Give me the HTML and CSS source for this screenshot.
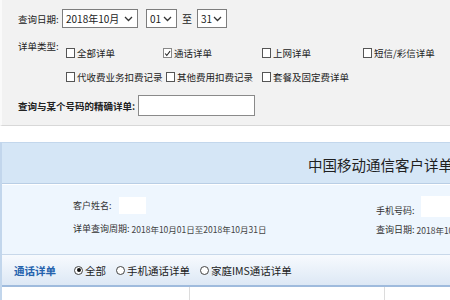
FILE: index.html
```html
<!DOCTYPE html>
<html lang="zh-CN">
<head>
<meta charset="utf-8">
<title>详单查询</title>
<link rel="stylesheet" href="styles.css">
</head>
<body>
<div class="query">
  <div class="row-date">
    <span class="lbl">查询日期:</span>
    <span class="sel sel-month"><span class="val">2018年10月</span><svg class="chev" width="9" height="6" viewBox="0 0 9 6"><path d="M1 1 L4.5 4.5 L8 1" fill="none" stroke="#333" stroke-width="1.3"/></svg></span>
    <span class="sel sel-day"><span class="val">01</span><svg class="chev" width="9" height="6" viewBox="0 0 9 6"><path d="M1 1 L4.5 4.5 L8 1" fill="none" stroke="#333" stroke-width="1.3"/></svg></span>
    <span class="to">至</span>
    <span class="sel sel-day2"><span class="val">31</span><svg class="chev" width="9" height="6" viewBox="0 0 9 6"><path d="M1 1 L4.5 4.5 L8 1" fill="none" stroke="#333" stroke-width="1.3"/></svg></span>
  </div>
  <div class="row-type">
    <span class="lbl type-lbl">详单类型:</span>
    <div class="checks">
      <label class="chk"><span class="box"></span>全部详单</label>
      <label class="chk"><span class="box checked"><svg width="9" height="9" viewBox="0 0 9 9"><path d="M1.5 4.5 L3.6 7 L7.8 1.5" fill="none" stroke="#222" stroke-width="1.3"/></svg></span>通话详单</label>
      <label class="chk"><span class="box"></span>上网详单</label>
      <label class="chk"><span class="box"></span>短信/彩信详单</label>
      <label class="chk"><span class="box"></span>代收费业务扣费记录</label>
      <label class="chk shift"><span class="box"></span>其他费用扣费记录</label>
      <label class="chk"><span class="box"></span>套餐及固定费详单</label>
    </div>
  </div>
  <div class="row-num">
    <span class="lbl bold">查询与某个号码的精确详单:</span>
    <span class="input"></span>
  </div>
</div>
<div class="spacer"></div>
<div class="report">
  <div class="title-bar"><h1>中国移动通信客户详单</h1></div>
  <div class="info">
    <div class="col col-left">
      <div class="irow irow-name"><span>客户姓名:</span><span class="blank blank-name"></span></div>
      <div class="irow irow-2">详单查询周期: <span class="dt">2018年10月01日至2018年10月31日</span></div>
    </div>
    <div class="col col-right">
      <div class="irow irow-phone"><span>手机号码:</span><span class="blank blank-phone"></span></div>
      <div class="irow irow-2">查询日期: <span class="dt">2018年10月31日</span></div>
    </div>
  </div>
  <div class="tabs">
    <span class="tab-title">通话详单</span>
    <label class="radio"><span class="dot on"></span>全部</label>
    <label class="radio"><span class="dot"></span>手机通话详单</label>
    <label class="radio"><span class="dot"></span>家庭IMS通话详单</label>
  </div>
  <div class="table">
    <div class="cell c1"></div>
    <div class="cell c2"></div>
    <div class="cell c3"></div>
  </div>
</div>
</body>
</html>
```
FILE: styles.css
```css
html, body {
  margin: 0;
  padding: 0;
  background: #ffffff;
  width: 450px;
  height: 300px;
  overflow: hidden;
  font-family: "Noto Sans CJK SC", "Noto Sans", sans-serif;
  color: #222;
}

.query {
  background: #f2f2f2;
  border-bottom: 1px solid #d8d8d8;
  border-left: 2px solid #fafafa;
  padding-left: 16px;
  box-sizing: border-box;
  height: 126px;
  font-size: 9.5px;
}

.lbl { white-space: nowrap; }
.bold { font-weight: bold; }

.row-date {
  display: flex;
  align-items: center;
  padding-top: 9px;
  height: 19px;
}
.row-date .lbl { width: 44px; }

.sel {
  display: flex;
  align-items: center;
  justify-content: space-between;
  height: 19px;
  box-sizing: border-box;
  background: #fff;
  border: 1px solid #7d7d7d;
  padding: 0 4px 0 3px;
  font-size: 10px;
}
.sel-month { width: 76px; }
.sel-day { width: 31px; margin-left: 8px; }
.sel-day2 { width: 30px; }
.to { margin: 0 5px 0 5px; font-size: 10px; }

.row-type {
  display: flex;
  margin-top: 13px;
}
.type-lbl {
  width: 48px;
  line-height: 11px;
}
.checks {
  display: grid;
  grid-template-columns: 97px 99px 101px auto;
  grid-auto-rows: 20px;
  row-gap: 4px;
  padding-top: 2px;
}
.chk {
  display: flex;
  align-items: center;
  white-space: nowrap;
}
.chk.shift { margin-left: 3px; }
.box {
  display: inline-flex;
  align-items: center;
  justify-content: center;
  width: 9px;
  height: 10px;
  box-sizing: border-box;
  border: 1px solid #555;
  background: #fff;
  margin-right: 2px;
}
.box.checked { border-color: #888; }

.row-num {
  display: flex;
  align-items: center;
  margin-top: 8px;
}
.row-num .lbl { width: 120px; }
.input {
  width: 117px;
  height: 21px;
  box-sizing: border-box;
  background: #fff;
  border: 1px solid #8a8a8a;
}

.spacer { height: 16px; }

.report {
  border-left: 2px solid #c2d6ec;
}

.title-bar {
  height: 42px;
  box-sizing: border-box;
  background: #d5e6f6;
  border-top: 1px solid #c3d7ec;
  border-bottom: 1px solid #b9cee5;
  overflow: hidden;
}
.title-bar h1 {
  margin: 0;
  padding-left: 306px;
  font-size: 14.5px;
  font-weight: normal;
  line-height: 43px;
  white-space: nowrap;
  color: #1f1f1f;
}

.info {
  display: flex;
  height: 70px;
  box-sizing: border-box;
  background: #eef6fe;
  border-top: 1px solid #ffffff;
  padding-left: 71px;
  font-size: 9px;
  color: #333;
  overflow: hidden;
}
.col { flex-shrink: 0; }
.col-left { width: 303px; padding-top: 12px; }
.col-right { padding-top: 11px; }

.irow { display: flex; align-items: center; white-space: nowrap; }
.irow-name { height: 17px; }
.irow-phone { height: 21px; align-items: flex-end; line-height: 12px; }
.irow-2 { margin-top: 8px; line-height: 14px; }
.irow-phone + .irow-2 { margin-top: 6px; }
.dt { font-size: 8.5px; margin-left: 2px; color: #444; }

.blank { background: #fff; display: inline-block; }
.blank-name { width: 27px; height: 17px; margin-left: 7px; }
.blank-phone { width: 40px; height: 21px; margin-left: 6px; }

.tabs {
  display: flex;
  align-items: center;
  height: 33px;
  box-sizing: border-box;
  border-top: 1px solid #c8d8ea;
  border-bottom: 2px solid #9fbbdd;
  background: linear-gradient(#f7fafe, #dde8f5);
  padding-left: 12px;
  font-size: 10.5px;
  color: #222;
}
.tab-title {
  color: #2462ad;
  font-weight: bold;
  width: 60px;
}
.radio {
  display: flex;
  align-items: center;
  margin-right: 10px;
  white-space: nowrap;
}
.dot {
  width: 9px;
  height: 9px;
  box-sizing: border-box;
  border: 1px solid #444;
  border-radius: 50%;
  background: #fff;
  margin-right: 2px;
  position: relative;
}
.dot.on::after {
  content: "";
  position: absolute;
  left: 1.5px;
  top: 1.5px;
  width: 4px;
  height: 4px;
  border-radius: 50%;
  background: #111;
}

.table {
  display: flex;
  height: 20px;
  background: #fff;
}
.cell { border-right: 1px solid #dcdcdc; }
.c1 { width: 187px; }
.c2 { width: 194px; }
.c3 { flex: 1; border-right: none; }
```
